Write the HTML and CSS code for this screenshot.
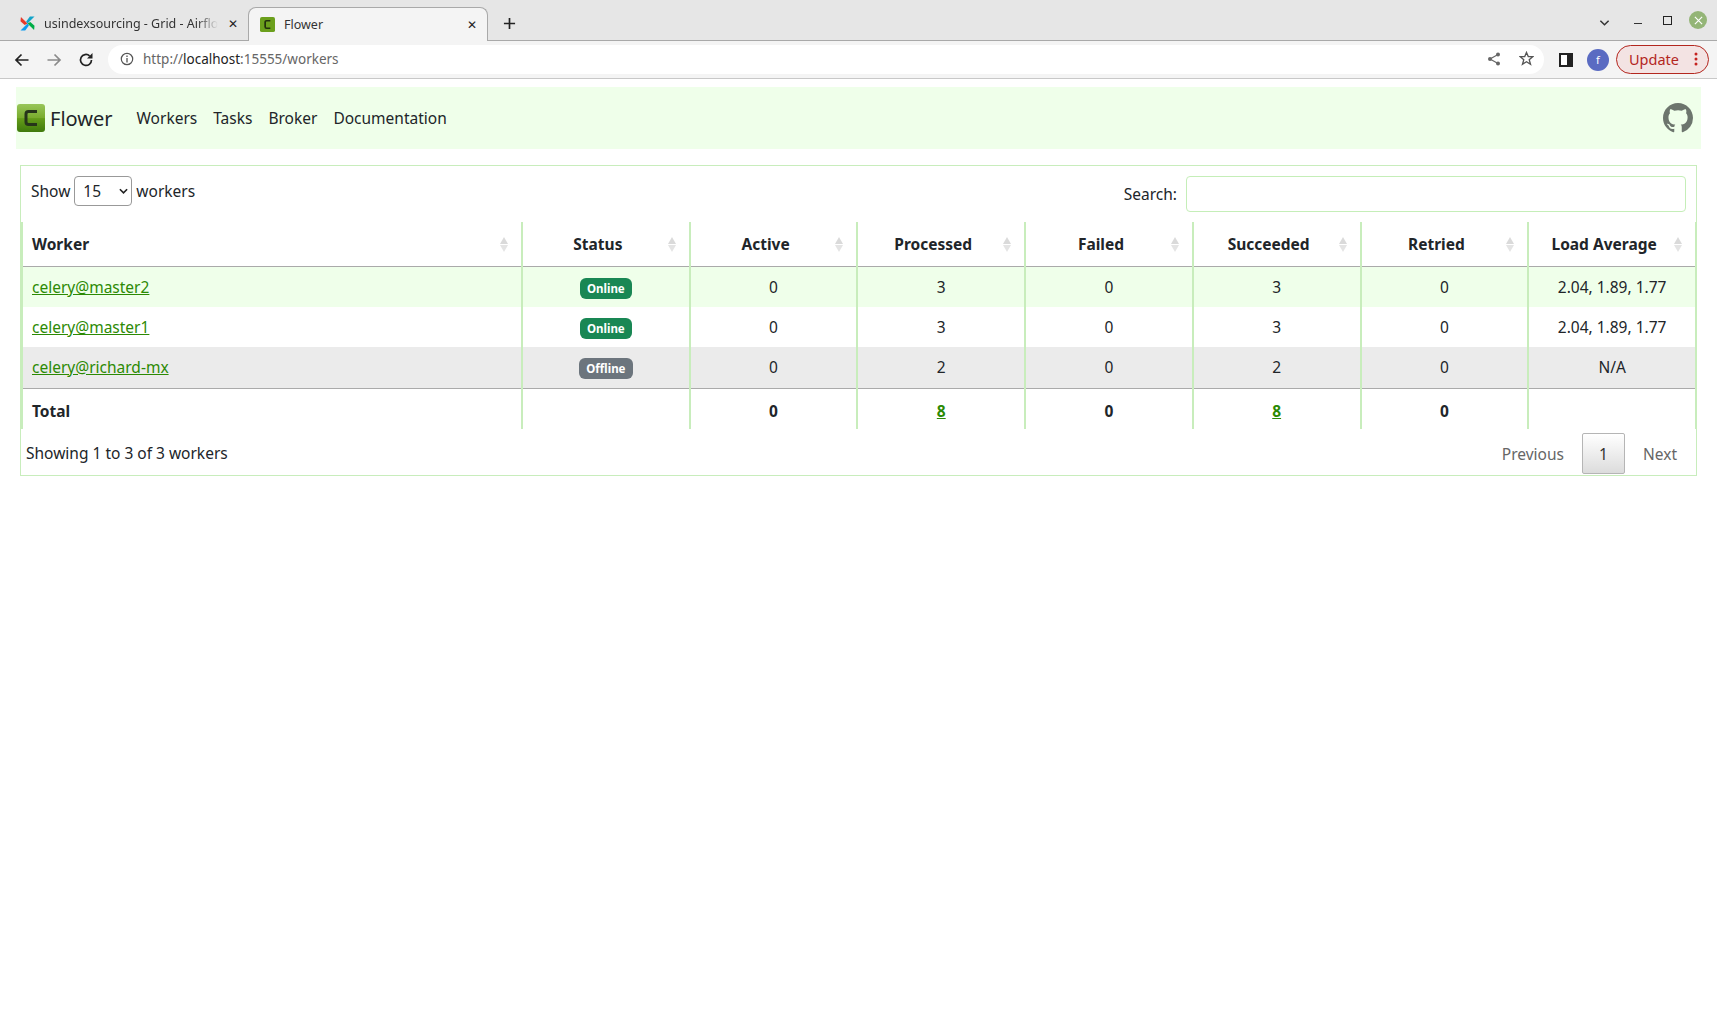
FILE: index.html
```html
<!DOCTYPE html>
<html lang="en">
<head>
    <meta charset="UTF-8">
    <title>Flower</title>
    <link rel="stylesheet" href="styles.css">
</head>
<body>
    <!-- Browser chrome -->
    <div class="tabstrip">
        <div class="tab">
            <svg class="favicon" viewBox="0 0 16 16">
                <path d="M8 8 L1 1 L0.5 5.5 L5 9.5Z" fill="#e8392a"/>
                <path d="M8 8 L15.5 0.5 L10.5 0.5 L6.5 6Z" fill="#11a3c9"/>
                <path d="M8 8 L15 15 L15.5 10.5 L11 6.5Z" fill="#00ad46"/>
                <path d="M8 8 L0.5 15.5 L5.5 15.5 L9.5 10Z" fill="#0c9cf0"/>
            </svg>
            <span class="tab-title fade">usindexsourcing - Grid - Airflo</span>
            <span class="tab-close">✕</span>
        </div>
        <div class="tab active">
            <svg class="favicon" viewBox="0 0 16 16">
                <rect width="16" height="16" rx="2" fill="#6b9f1c"/>
                <path d="M11 4H7Q5.5 4 5.5 5.5V10.5Q5.5 12 7 12H11" fill="none" stroke="#23300c" stroke-width="1.8"/>
            </svg>
            <span class="tab-title">Flower</span>
            <span class="tab-close">✕</span>
        </div>
        <svg class="new-tab" viewBox="0 0 14 14"><path d="M7 1V13M1 7H13" stroke="#222" stroke-width="1.8"/></svg>
        <div class="window-controls">
            <svg class="win-chevron" viewBox="0 0 12 8"><path d="M1.5 1.5L6 6L10.5 1.5" fill="none" stroke="#333" stroke-width="1.6"/></svg>
            <span class="win-min"></span>
            <span class="win-max"></span>
            <span class="win-close">
                <svg viewBox="0 0 10 10"><path d="M1 1L9 9M9 1L1 9" stroke="#fff" stroke-width="1.3"/></svg>
            </span>
        </div>
    </div>
    <div class="toolbar">
        <svg class="tool-icon" viewBox="0 0 16 16"><path d="M14.5 8H2M7.5 2.5L2 8L7.5 13.5" fill="none" stroke="#222" stroke-width="1.7"/></svg>
        <svg class="tool-icon" viewBox="0 0 16 16"><path d="M1.5 8H14M8.5 2.5L14 8L8.5 13.5" fill="none" stroke="#8a8a8a" stroke-width="1.7"/></svg>
        <svg class="tool-icon" viewBox="0 0 16 16"><path d="M13.5 8A5.5 5.5 0 1 1 11.6 3.8" fill="none" stroke="#222" stroke-width="1.7"/><path d="M14.5 1V6.5H9Z" fill="#222"/></svg>
        <div class="omnibox">
            <svg class="info-icon" viewBox="0 0 14 14"><circle cx="7" cy="7" r="5.7" fill="none" stroke="#555" stroke-width="1.2"/><path d="M7 6V10.5M7 3.4V5" stroke="#555" stroke-width="1.3"/></svg>
            <span class="url">http://<b>localhost</b>:15555/workers</span>
            <svg class="omni-share" viewBox="0 0 14 14"><path d="M11 2.5L3 7L11 11.5" fill="none" stroke="#666" stroke-width="1.2"/><circle cx="11" cy="2.5" r="2" fill="#666"/><circle cx="3" cy="7" r="2" fill="#666"/><circle cx="11" cy="11.5" r="2" fill="#666"/></svg>
            <svg class="omni-star" viewBox="0 0 16 16"><path d="M8 1.5L9.9 6H14.8L10.9 9.2L12.3 14.2L8 11.4L3.7 14.2L5.1 9.2L1.2 6H6.1Z" fill="none" stroke="#555" stroke-width="1.4"/></svg>
        </div>
        <svg class="side-panel" viewBox="0 0 14 14"><rect width="14" height="14" fill="#222"/><rect x="2" y="2" width="6" height="10" fill="#fff"/></svg>
        <span class="avatar">f</span>
        <div class="update-btn"><span>Update</span><svg viewBox="0 0 4 14"><circle cx="2" cy="2" r="1.5"/><circle cx="2" cy="7" r="1.5"/><circle cx="2" cy="12" r="1.5"/></svg></div>
    </div>

    <!-- Flower nav -->
    <nav class="navbar">
        <svg class="brand-logo" viewBox="0 0 28 28">
            <defs>
                <linearGradient id="logo-bg" x1="0" y1="0" x2="0" y2="1">
                    <stop offset="0" stop-color="#98c65a"/>
                    <stop offset="0.5" stop-color="#78ab2c"/>
                    <stop offset="0.52" stop-color="#659c1a"/>
                    <stop offset="1" stop-color="#3f7a0c"/>
                </linearGradient>
            </defs>
            <rect width="28" height="28" rx="3" fill="url(#logo-bg)"/>
            <path d="M20 7.5H11.5Q9 7.5 9 10V18Q9 20.5 11.5 20.5H20" fill="none" stroke="#26351a" stroke-width="3"/>
        </svg>
        <span class="brand-name">Flower</span>
        <a class="nav-link first">Workers</a>
        <a class="nav-link">Tasks</a>
        <a class="nav-link">Broker</a>
        <a class="nav-link">Documentation</a>
        <svg class="github" viewBox="0 0 16 16"><path fill="#6c756d" d="M8 0C3.58 0 0 3.58 0 8c0 3.54 2.29 6.53 5.47 7.59.4.07.55-.17.55-.38 0-.19-.01-.82-.01-1.49-2.01.37-2.53-.49-2.69-.94-.09-.23-.48-.94-.82-1.13-.28-.15-.68-.52-.01-.53.63-.01 1.08.58 1.23.82.72 1.21 1.87.87 2.33.66.07-.52.28-.87.51-1.07-1.78-.2-3.64-.89-3.64-3.95 0-.87.31-1.59.82-2.15-.08-.2-.36-1.02.08-2.12 0 0 .67-.21 2.2.82.64-.18 1.32-.27 2-.27s1.36.09 2 .27c1.53-1.04 2.2-.82 2.2-.82.44 1.1.16 1.92.08 2.12.51.56.82 1.27.82 2.15 0 3.07-1.87 3.75-3.65 3.95.29.25.54.73.54 1.48 0 1.07-.01 1.93-.01 2.2 0 .21.15.46.55.38A8.01 8.01 0 0 0 16 8c0-4.42-3.58-8-8-8z"/></svg>
    </nav>

    <!-- Workers table -->
    <div class="panel">
        <div class="panel-top">
            <label class="length">Show <span class="fake-select">15<svg viewBox="0 0 10 6"><path d="M1 1L5 5L9 1" fill="none" stroke="#222" stroke-width="1.8"/></svg></span> workers</label>
            <label class="search">Search: <input type="text"></label>
        </div>
        <table class="workers">
            <thead>
                <tr>
                    <th class="left col-worker">Worker</th>
                    <th>Status</th>
                    <th>Active</th>
                    <th>Processed</th>
                    <th>Failed</th>
                    <th>Succeeded</th>
                    <th>Retried</th>
                    <th>Load Average</th>
                </tr>
            </thead>
            <tbody>
                <tr class="row-green">
                    <td class="left"><a href="#">celery@master2</a></td>
                    <td><span class="badge online">Online</span></td>
                    <td>0</td><td>3</td><td>0</td><td>3</td><td>0</td><td>2.04, 1.89, 1.77</td>
                </tr>
                <tr>
                    <td class="left"><a href="#">celery@master1</a></td>
                    <td><span class="badge online">Online</span></td>
                    <td>0</td><td>3</td><td>0</td><td>3</td><td>0</td><td>2.04, 1.89, 1.77</td>
                </tr>
                <tr class="row-grey">
                    <td class="left"><a href="#">celery@richard-mx</a></td>
                    <td><span class="badge offline">Offline</span></td>
                    <td>0</td><td>2</td><td>0</td><td>2</td><td>0</td><td>N/A</td>
                </tr>
            </tbody>
            <tfoot>
                <tr>
                    <td class="left">Total</td>
                    <td></td>
                    <td>0</td><td><a href="#">8</a></td><td>0</td><td><a href="#">8</a></td><td>0</td><td></td>
                </tr>
            </tfoot>
        </table>
        <div class="panel-bottom">
            <span>Showing 1 to 3 of 3 workers</span>
            <div class="pager">
                <span class="page-link">Previous</span>
                <span class="page-current">1</span>
                <span class="page-link">Next</span>
            </div>
        </div>
    </div>
</body>
</html>
```

FILE: styles.css
```css
body {
    margin: 0;
    font-family: "Noto Sans", "Lato", sans-serif;
    font-size: 15.5px;
    color: #212529;
    background-color: #fff;
}

/* browser chrome */
.tabstrip {
    display: flex;
    align-items: flex-end;
    height: 40px;
    background-color: #e6e6e6;
    border-bottom: 1px solid #a9a9a9;
    font-size: 12.5px;
    color: #333;
}

.tab {
    display: flex;
    align-items: center;
    width: 239px;
    height: 33px;
    padding: 0 10px 0 20px;
    box-sizing: border-box;
}

.tab.active {
    width: 240px;
    padding-left: 11px;
    height: 34px;
    margin-bottom: -1px;
    background-color: #f4f4f4;
    border: 1px solid #a9a9a9;
    border-bottom: none;
    border-radius: 8px 8px 0 0;
}

.tab:first-child {
    width: 248px;
}

.favicon {
    width: 15px;
    height: 15px;
    margin-right: 9px;
    flex-shrink: 0;
}

.tab-title {
    flex: 1;
    white-space: nowrap;
    overflow: hidden;
}

.fade {
    -webkit-mask-image: linear-gradient(to right, #000 88%, transparent);
    mask-image: linear-gradient(to right, #000 88%, transparent);
}

.tab-close {
    margin-left: 10px;
    font-size: 12px;
    color: #222;
}

.new-tab {
    width: 13px;
    height: 13px;
    margin: 0 0 10px 15px;
}

.window-controls {
    display: flex;
    align-items: center;
    margin-left: auto;
    height: 40px;
    padding: 0 10px 0 0;
    box-sizing: border-box;
}

.win-chevron {
    width: 11px;
    height: 8px;
    margin-right: 24px;
    margin-top: 5px;
}

.win-min {
    width: 8px;
    height: 1px;
    margin-right: 21px;
    margin-top: 6px;
    background-color: #333;
}

.win-max {
    width: 7px;
    height: 7px;
    margin-right: 17px;
    border: 1px solid #222;
}

.win-close {
    display: flex;
    align-items: center;
    justify-content: center;
    width: 18px;
    height: 18px;
    border-radius: 50%;
    background-color: #94b577;
}

.win-close svg {
    width: 9px;
    height: 9px;
}

.toolbar {
    display: flex;
    align-items: center;
    height: 37px;
    background-color: #f4f4f4;
    border-bottom: 1px solid #c8c8c8;
    padding-left: 14px;
}

.tool-icon {
    width: 16px;
    height: 16px;
    margin-right: 16px;
}

.omnibox {
    display: flex;
    align-items: center;
    width: 1436px;
    height: 29px;
    margin-left: -2px;
    padding: 0 10px 2px 12px;
    box-sizing: border-box;
    background-color: #fff;
    border-radius: 15px;
    font-size: 13.5px;
}

.info-icon {
    width: 14px;
    height: 14px;
    margin-right: 9px;
}

.url {
    color: #666;
    flex: 1;
}

.url b {
    font-weight: normal;
    color: #222;
}

.omni-share {
    width: 14px;
    height: 14px;
    margin-right: 18px;
}

.omni-star {
    width: 15px;
    height: 15px;
}

.side-panel {
    width: 14px;
    height: 14px;
    margin-left: 15px;
}

.avatar {
    width: 22px;
    height: 22px;
    margin-left: 14px;
    border-radius: 50%;
    background-color: #5a6bc2;
    color: #fff;
    font-size: 11px;
    line-height: 22px;
    text-align: center;
}

.update-btn {
    display: flex;
    align-items: center;
    justify-content: space-between;
    width: 93px;
    height: 29px;
    margin-left: 7px;
    padding: 0 10px 1px 12px;
    box-sizing: border-box;
    border: 1px solid #b3261e;
    border-radius: 15px;
    background-color: #f3e3e3;
    color: #b3261e;
    font-size: 14.5px;
}

.update-btn svg {
    width: 4px;
    height: 14px;
    fill: #c5221f;
}

/* flower nav */
.navbar {
    display: flex;
    align-items: center;
    height: 62px;
    margin: 8px 16px 0 16px;
    padding: 0 0 0 1px;
    background-color: #efffea;
}

.brand-logo {
    width: 28px;
    height: 28px;
}

.brand-name {
    margin-left: 5px;
    font-size: 20px;
}

.nav-link {
    margin-left: 16px;
}

.nav-link.first {
    margin-left: 24px;
}

.github {
    width: 30px;
    height: 30px;
    margin-left: auto;
    margin-right: 8px;
}

/* workers panel */
.panel {
    margin: 16px 20px 0 20px;
    border: 1px solid #c8edbc;
    height: 309px;
}

.panel-top {
    display: flex;
    justify-content: space-between;
    height: 56px;
    padding: 10px 10px 0 10px;
    box-sizing: border-box;
}

.length {
    display: flex;
    align-items: center;
    align-self: flex-start;
    height: 30px;
    gap: 4px;
}

.fake-select {
    display: flex;
    align-items: center;
    justify-content: space-between;
    width: 58px;
    height: 30px;
    padding: 0 3px 0 8px;
    box-sizing: border-box;
    border: 1px solid #999;
    border-radius: 4px;
}

.fake-select svg {
    width: 9px;
    height: 6px;
}

.search {
    display: flex;
    align-items: center;
    align-self: flex-start;
    gap: 9px;
}

.search input {
    width: 500px;
    height: 36px;
    padding: 0;
    box-sizing: border-box;
    border: 1px solid #c5eeb8;
    border-radius: 4px;
}

.workers {
    width: calc(100% + 1px);
    border-collapse: collapse;
    table-layout: fixed;
}

.workers th,
.workers td {
    text-align: center;
    border-left: 2px solid #c8edbc;
    padding: 0 10px;
}

.workers tr > :last-child {
    border-right: 2px solid #c8edbc;
}

.workers th {
    position: relative;
    height: 44px;
    padding-right: 26px;
    font-weight: bold;
    border-bottom: 1px solid #aaa;
}

/* sort arrows */
.workers th::before,
.workers th::after {
    content: "";
    position: absolute;
    right: 13px;
    border-left: 4px solid transparent;
    border-right: 4px solid transparent;
}

.workers th::before {
    top: 15px;
    border-bottom: 7px solid #dadada;
}

.workers th::after {
    top: 23px;
    border-top: 7px solid #e4e4e4;
}

.workers td {
    height: 40px;
}

.col-worker {
    width: 500px;
    box-sizing: border-box;
}

.workers .left {
    text-align: left;
    padding-left: 9px;
}

.row-green td {
    background-color: #efffea;
}

.row-grey td {
    height: 39px;
    padding-bottom: 2px;
    background-color: #ebebeb;
    border-bottom: 1px solid #aaa;
}

.workers a {
    color: #2c8a04;
    text-decoration: underline;
}

.workers tfoot td {
    height: 37px;
    padding-top: 3px;
    font-weight: bold;
}

.badge {
    display: inline-block;
    margin-top: 3px;
    padding: 3px 7px;
    border-radius: 6px;
    color: #fff;
    font-size: 11.5px;
    font-weight: bold;
    line-height: 15px;
}

.online {
    background-color: #198754;
}

.offline {
    background-color: #6c757d;
}

.panel-bottom {
    display: flex;
    justify-content: space-between;
    padding: 0 1px 0 5px;
}

.panel-bottom > span {
    margin-top: 13px;
}

.pager {
    display: flex;
    align-items: center;
    margin-top: 4px;
    color: #666;
}

.page-link {
    padding: 0 18px;
}

.page-current {
    width: 43px;
    height: 41px;
    line-height: 41px;
    text-align: center;
    box-sizing: border-box;
    color: #333;
    border: 1px solid #b5b5b5;
    border-radius: 2px;
    background: linear-gradient(to bottom, #fff, #dcdcdc);
}
```
